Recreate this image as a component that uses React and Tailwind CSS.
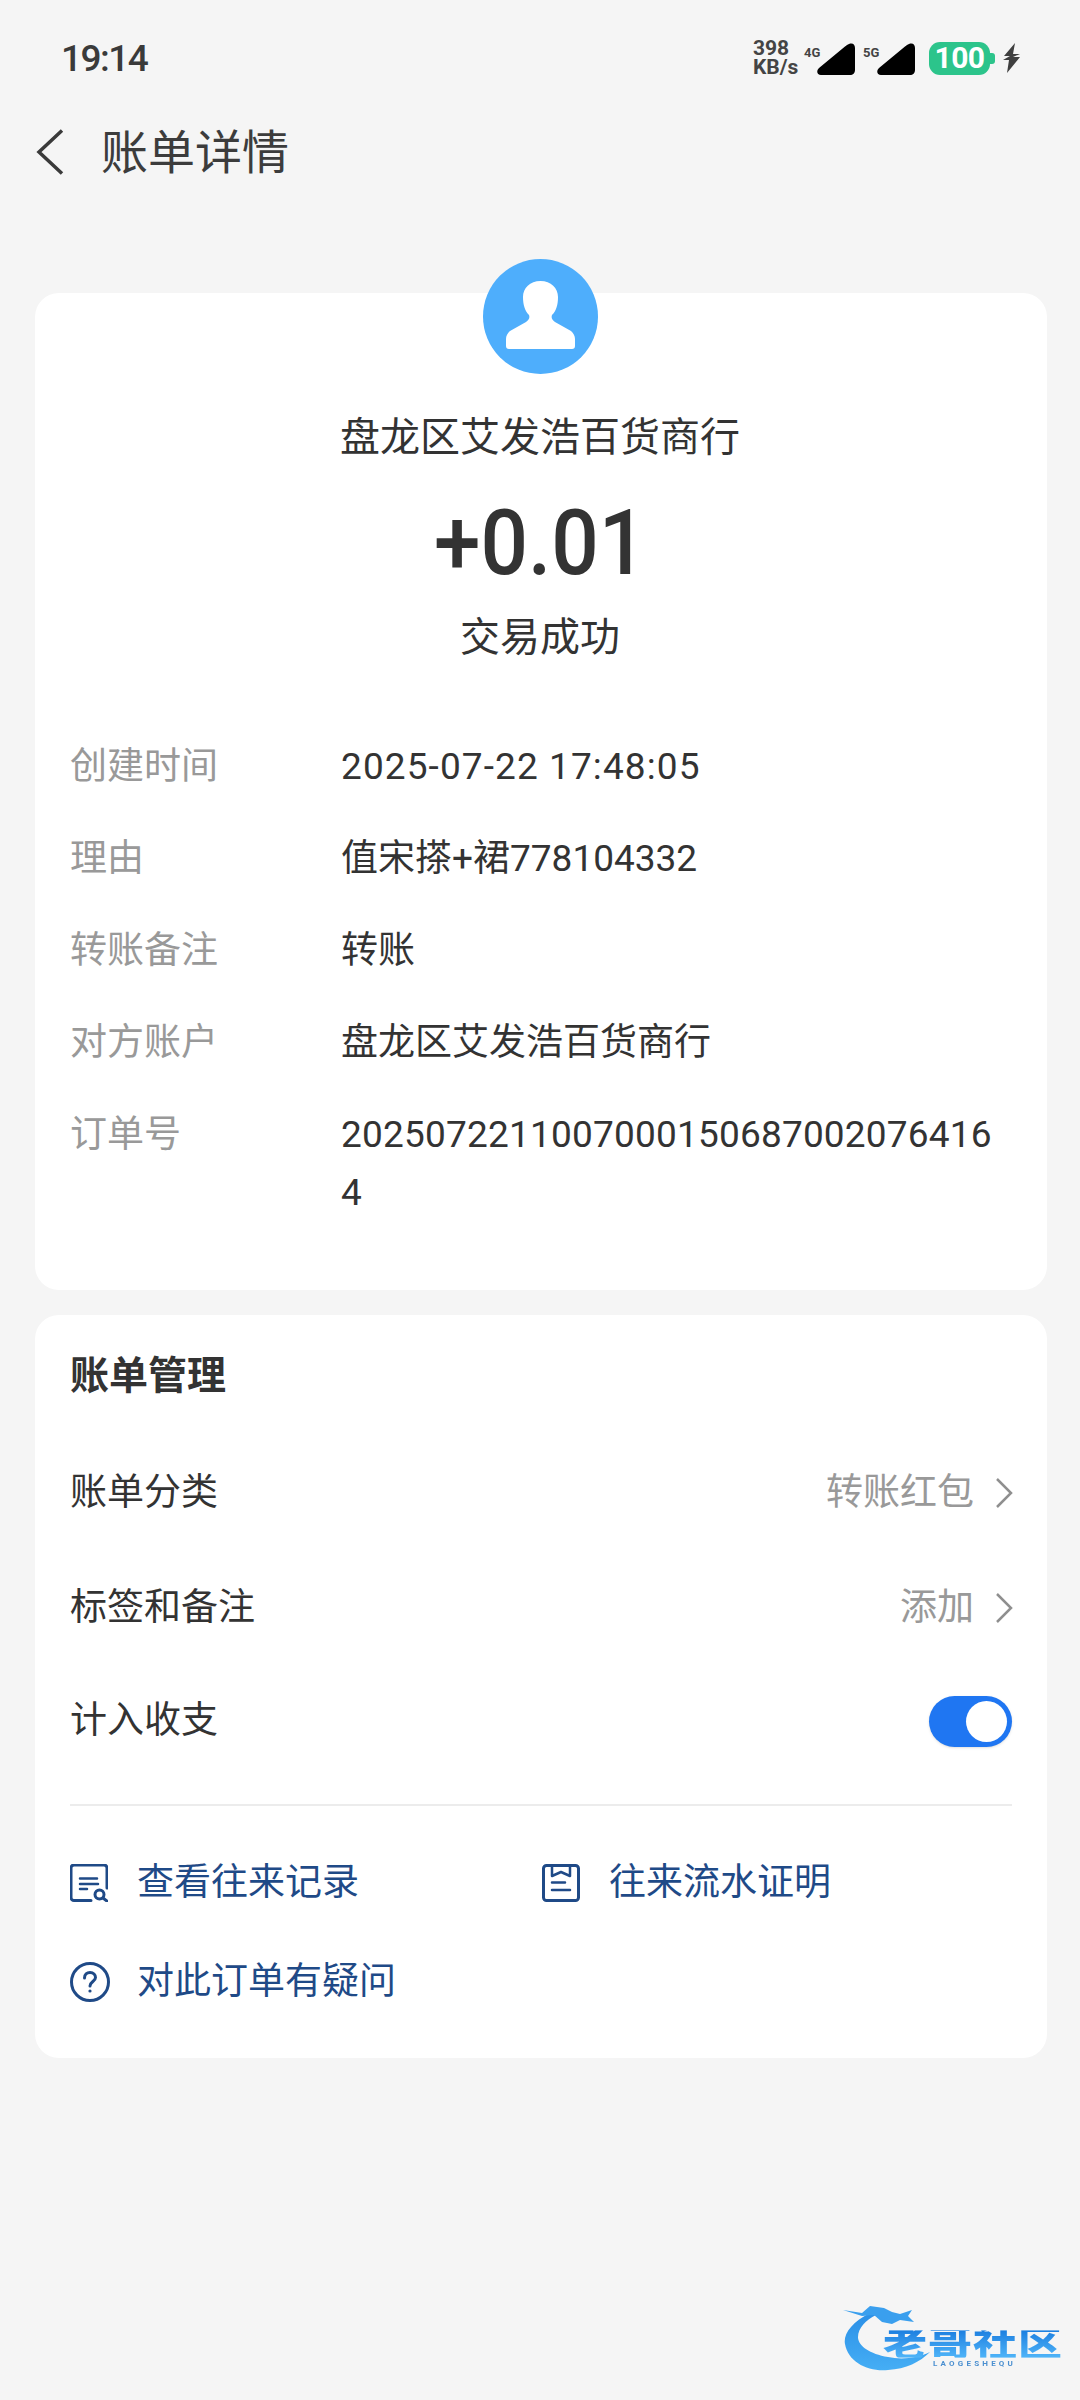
import React from 'react';

const details = [
  { label: '创建时间', value: '2025-07-22 17:48:05', valueClass: 'tracking-[1.1px]' },
  { label: '理由', value: '值宋搽+裙778104332' },
  { label: '转账备注', value: '转账' },
  { label: '对方账户', value: '盘龙区艾发浩百货商行' },
  { label: '订单号', value: '2025072211007000150687002076416 4', valueClass: 'tracking-[0.2px]' },
];

// Solid corner-cut signal bars
const SignalBars = () => (
  <svg width="38" height="32" viewBox="0 0 38 32" className="block">
    <path d="M32 1 C36 -0.500 38 2 38 5 V27 C38 30 36 32 33 32 H4 C0 32 -1 28 2 25 L28 3.500 C29.500 2.300 30.500 1.500 32 1 Z" fill="#000" />
  </svg>
);

const StatusBar = () => (
  <div className="flex h-[116px] items-center justify-between pl-[61px] pr-[59px]">
    <span className="text-[37px] font-medium leading-none tracking-[-1.5px] text-[#3a3a3a]">19:14</span>
    <div className="flex items-center">
      <div className="flex w-[50px] flex-col text-[21px] font-bold leading-[19px] text-[#444]">
        <span>398</span>
        <span>KB/s</span>
      </div>
      <span className="mb-[10px] ml-[1px] w-[18px] text-[13px] font-bold text-[#444]">4G</span>
      <div className="-ml-[5px] mt-[2px]"><SignalBars /></div>
      <span className="mb-[10px] ml-[8px] w-[18px] text-[13px] font-bold text-[#444]">5G</span>
      <div className="-ml-[4px] mt-[2px]"><SignalBars /></div>
      <div className="ml-[14px] flex h-[33px] w-[61px] items-center justify-center rounded-[11px] bg-[#2cc48b] text-[30px] font-bold leading-none tracking-[-0.5px] text-white">100</div>
      <div className="h-[11px] w-[5px] rounded-r-[3px] bg-[#2cc48b]" />
      <svg width="18" height="30" viewBox="0 0 18 30" className="ml-[8px]">
        <path d="M12 0 L1 13 H7 L0 17 H6 L4 30 L17 14 H10 L17 11 H10 Z" fill="#3f3f3f" />
      </svg>
    </div>
  </div>
);

const DetailRow = ({ label, value, valueClass }) => (
  <div className="flex text-[37px] leading-[58px]">
    <div className="w-[271px] shrink-0 text-[#999]">{label}</div>
    <div className={`w-[670px] break-words text-[#333] ${valueClass || ''}`}>{value}</div>
  </div>
);

const RowChevron = () => (
  <svg width="18" height="32" viewBox="0 0 18 32" fill="none" stroke="#8f8f8f" strokeWidth="2.500" className="ml-[21px] -mr-[1px]">
    <path d="M2 2 L16 16 L2 30" />
  </svg>
);

const ManageRow = ({ label, hint, children, className }) => (
  <div className={`flex items-center justify-between text-[37px] leading-[58px] text-[#333] ${className}`}>
    <span>{label}</span>
    {hint && (
      <div className="flex items-center text-[#999]">
        <span>{hint}</span>
        <RowChevron />
      </div>
    )}
    {children}
  </div>
);

const RecordIcon = () => (
  <svg width="38" height="38" viewBox="0 0 38 38" fill="none" stroke="#1f4a87" strokeWidth="3" strokeLinecap="round">
    <path d="M21 36.500 H4 a3 3 0 0 1 -3 -3 V4 a3 3 0 0 1 3 -3 H34 a3 3 0 0 1 3 3 V24" />
    <path d="M10 14.500 H27 M10 20 H28 M10 25 H17" strokeWidth="2.500" />
    <circle cx="29.500" cy="30.500" r="4.500" />
    <path d="M33 34 L37.500 37.500" />
  </svg>
);

const ProofIcon = () => (
  <svg width="38" height="38" viewBox="0 0 38 38" fill="none" stroke="#1f4a87" strokeWidth="3" strokeLinecap="round" strokeLinejoin="round">
    <rect x="1.500" y="1.500" width="35" height="35" rx="3" />
    <path d="M10 2 V12 L19 8 L28 12 V2" strokeWidth="2.500" />
    <path d="M10 18.500 H23 M10 26 H28" strokeWidth="2.500" />
  </svg>
);

const QuestionIcon = () => (
  <svg width="40" height="40" viewBox="0 0 40 40" fill="none" stroke="#1f4a87" strokeWidth="3" strokeLinecap="round">
    <circle cx="20" cy="20" r="18.500" />
    <path d="M14.500 16 C14.500 12.500 17 10.500 20 10.500 C23.500 10.500 25.500 12.800 25.500 15.500 C25.500 19.500 20 19.500 20 24" />
    <circle cx="20" cy="29" r="1.600" fill="#1f4a87" stroke="none" />
  </svg>
);

const LinkItem = ({ icon, text, className }) => (
  <div className={`flex items-center text-[37px] leading-[58px] text-[#1f4a87] ${className}`}>
    <div className="flex w-[67px] shrink-0 items-center">{icon}</div>
    <span>{text}</span>
  </div>
);

// Floating community badge in the lower right corner
const CommunityMark = () => (
  <div className="absolute left-[840px] top-[2300px] h-[76px] w-[232px] blur-[0.7px]">
    <svg width="232" height="76" viewBox="0 0 232 76" className="absolute inset-0">
      <defs>
        <linearGradient id="crescent" x1="0" y1="0" x2="0" y2="1">
          <stop offset="0" stopColor="#2b8fe6" />
          <stop offset="1" stopColor="#45aef5" />
        </linearGradient>
      </defs>
      <path d="M30 13 C12 22 3 34 5 44 C8 62 28 72 48 70 C66 69 80 62 90 52 C78 58 62 60 48 57 C30 54 18 46 18 37 C18 28 26 20 36 15 Z" fill="url(#crescent)" />
      <path d="M3 10 L22 13 L30 6 L44 8 L52 12 L60 14 L72 10 L68 16 L74 22 L60 20 L52 24 L42 22 L34 15 L22 16 Z" fill="#3a9fee" />
    </svg>
    <div className="absolute left-[43px] top-[27px] origin-center scale-y-[0.8] whitespace-nowrap bg-gradient-to-b from-[#1c7fe0] to-[#4fb4f8] bg-clip-text text-[44px] font-black leading-[34px] tracking-[1px] text-transparent">老哥社区</div>
    <div className="absolute left-[93px] top-[59px] text-[8px] font-bold leading-[10px] tracking-[3.200px] text-[#4a8fd0]">LAOGESHEQU</div>
  </div>
);

const App = () => {
  return (
    <div className="relative min-h-[2400px] w-[1080px] bg-[#f5f5f5] font-['Roboto','Noto_Sans_CJK_SC',sans-serif]">
      <StatusBar />

      {/* Title bar */}
      <div className="flex h-[72px] items-center pl-[36px]">
        <svg width="28" height="46" viewBox="0 0 28 46" fill="none" stroke="#3a3a3a" strokeWidth="3.500">
          <path d="M26 1.500 L3 23 L26 44.500" />
        </svg>
        <span className="ml-[37px] text-[47px] leading-none text-[#3c3c3c]">账单详情</span>
      </div>

      <div className="mt-[105px] pl-[35px] pr-[33px]">
        {/* Bill summary */}
        <div className="h-[997px] rounded-[24px] bg-white px-[35px]">
          <div className="flex flex-col items-center pr-[2px]">
            <div className="-mt-[34px] h-[115px] w-[115px] rounded-full bg-[#4eaefc]">
              <svg width="115" height="115" viewBox="0 0 115 115">
                <path d="M57.500 22 C47 22 40 29 40 38 C40 46 42 52 46 56 C47 59 46 61 43 63 L27 72 C24.500 74 23 77 23 80 V87 a3 3 0 0 0 3 3 H89 a3 3 0 0 0 3 -3 V80 C92 77 90.500 74 88 72 L72 63 C69 61 68 59 69 56 C73 52 75 46 75 38 C75 29 68 22 57.500 22 Z" fill="#fff" />
              </svg>
            </div>
            <div className="mt-[34px] text-[40px] leading-[60px] text-[#333]">盘龙区艾发浩百货商行</div>
            <div className="mt-[26px] origin-center scale-x-[0.93] text-[90px] font-medium leading-[100px] text-[#333]">+0.01</div>
            <div className="mt-[14px] text-[40px] leading-[60px] text-[#333]">交易成功</div>
          </div>
          <div className="mt-[70px] flex flex-col gap-[34px]">
            {details.map((row) => (
              <DetailRow key={row.label} label={row.label} value={row.value} valueClass={row.valueClass} />
            ))}
          </div>
        </div>

        {/* Bill management */}
        <div className="mt-[25px] h-[743px] rounded-[24px] bg-white px-[35px] pt-[31px]">
          <div className="text-[39px] font-bold leading-[60px] text-[#333]">账单管理</div>
          <ManageRow label="账单分类" hint="转账红包" className="mt-[58px]" />
          <ManageRow label="标签和备注" hint="添加" className="mt-[57px]" />
          <ManageRow label="计入收支" className="mt-[55px]">
            <div className="flex h-[51px] w-[83px] items-center justify-end rounded-full bg-[#1f76f2] pr-[5px] shadow-sm">
              <div className="h-[41px] w-[41px] rounded-full bg-white" />
            </div>
          </ManageRow>
          <div className="mt-[54px] h-[2px] bg-[#ececec]" />
          <div className="mt-[48px] flex">
            <LinkItem icon={<RecordIcon />} text="查看往来记录" className="w-[472px]" />
            <LinkItem icon={<ProofIcon />} text="往来流水证明" />
          </div>
          <LinkItem icon={<QuestionIcon />} text="对此订单有疑问" className="mt-[41px]" />
        </div>
      </div>

      <CommunityMark />
    </div>
  );
};

export default App;
